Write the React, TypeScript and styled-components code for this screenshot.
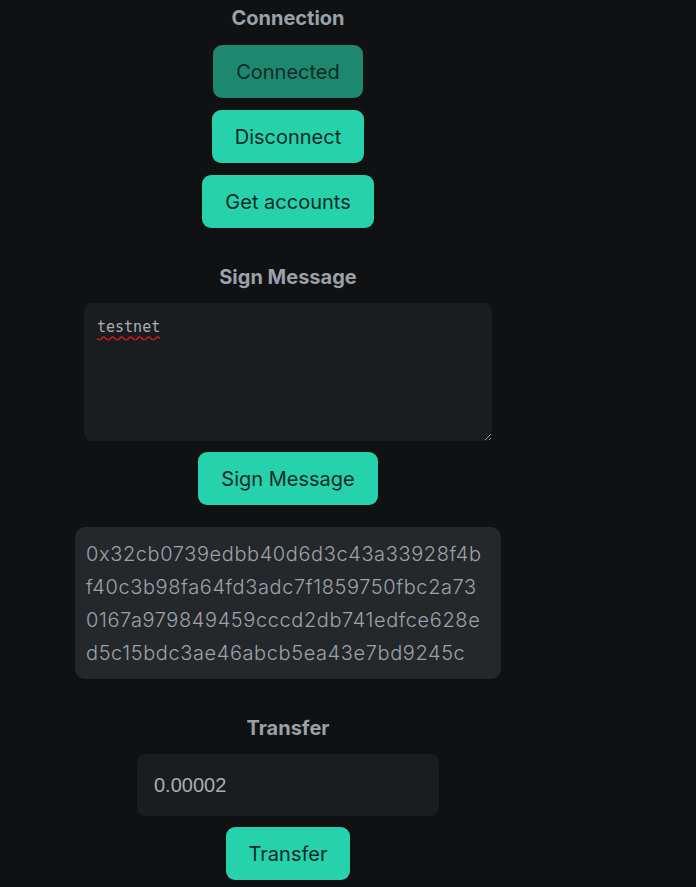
import React from "react";
import styled, { createGlobalStyle } from "styled-components";

const Global = createGlobalStyle`
  html, body { margin: 0; padding: 0; background: #101113; }
  body { font-family: Inter, "Noto Sans", sans-serif; }
`;

const Page = styled.div`
  width: 576px;
  padding-top: 6px;
  display: flex;
  flex-direction: column;
  align-items: center;
  gap: 37px;
`;

const Section = styled.section<{ $gap: number }>`
  display: flex;
  flex-direction: column;
  align-items: center;
  gap: ${(p) => p.$gap}px;
`;

const Heading = styled.h2`
  margin: 0 0 3px;
  font-size: 20px;
  line-height: 24px;
  font-weight: 700;
  color: #9aa1a8;
`;

const Button = styled.button<{ $active?: boolean }>`
  font-family: Inter, "Noto Sans", sans-serif;
  font-size: 20px;
  line-height: 26px;
  padding: 14px 23px 13px;
  border: none;
  border-radius: 9px;
  color: #0e2a28;
  background: ${(p) => (p.$active ? "#1d886d" : "#25d2ab")};
  cursor: pointer;
`;

const TextArea = styled.textarea`
  box-sizing: border-box;
  width: 408px;
  height: 138px;
  padding: 14px 13px 12px;
  border: none;
  border-radius: 8px;
  background: #1a1d1f;
  color: #a9aeb3;
  font-family: "DejaVu Sans Mono", monospace;
  font-size: 15px;
  line-height: 20px;
  outline: none;
  text-decoration: underline wavy #d01818;
  text-decoration-skip-ink: none;
  text-underline-offset: 3px;
`;

const Result = styled.div`
  box-sizing: border-box;
  width: 426px;
  margin-top: 11px;
  padding: 11px 17px 9px 11px;
  border-radius: 10px;
  background: #25282b;
  color: #9ca2a8;
  font-size: 20px;
  font-weight: 300;
  letter-spacing: 0.6px;
  line-height: 33px;
  word-break: break-all;
`;

const AmountInput = styled.input`
  box-sizing: border-box;
  width: 302px;
  height: 62px;
  padding: 0 17px;
  border: none;
  border-radius: 8px;
  background: #1a1d1f;
  color: #a9aeb3;
  font-family: "Liberation Sans", Arial, sans-serif;
  font-size: 20px;
  outline: none;
`;

export default function App() {
  return (
    <>
      <Global />
      <Page>
        <Section $gap={12}>
          <Heading>Connection</Heading>
          <Button $active>Connected</Button>
          <Button>Disconnect</Button>
          <Button>Get accounts</Button>
        </Section>
        <Section $gap={11}>
          <Heading>Sign Message</Heading>
          <TextArea defaultValue="testnet" spellCheck />
          <Button>Sign Message</Button>
          <Result>
            0x32cb0739edbb40d6d3c43a33928f4bf40c3b98fa64fd3adc7f1859750fbc2a730167a979849459cccd2db741edfce628ed5c15bdc3ae46abcb5ea43e7bd9245c
          </Result>
        </Section>
        <Section $gap={11}>
          <Heading>Transfer</Heading>
          <AmountInput defaultValue="0.00002" />
          <Button>Transfer</Button>
        </Section>
      </Page>
    </>
  );
}
